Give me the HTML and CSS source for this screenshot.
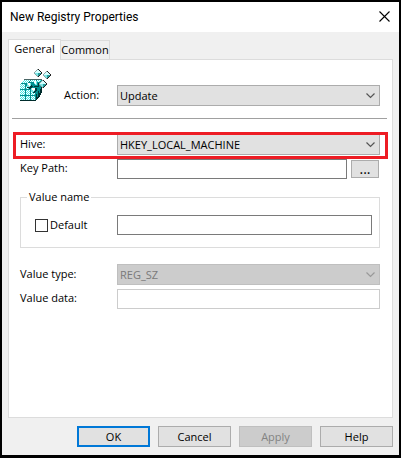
FILE: index.html
```html
<!DOCTYPE html>
<html lang="en">
<head>
<meta charset="utf-8">
<meta name="viewport" content="width=device-width, initial-scale=1">
<title>New Registry Properties</title>
<link rel="stylesheet" href="styles.css">
</head>
<body>
<main class="window">
  <header class="titlebar">
    <h1 class="title">New Registry Properties</h1>
    <button class="close" type="button" aria-label="Close">
      <svg width="11" height="11" viewBox="0 0 11 11"><path d="M.5 .5l10 10M10.500 .5l-10 10" stroke="#000" stroke-width="1.1" fill="none"/></svg>
    </button>
  </header>
  <form class="body">
    <div class="tabs" role="tablist">
      <button class="tab active" type="button" role="tab" aria-selected="true">General</button>
      <button class="tab" type="button" role="tab" aria-selected="false">Common</button>
    </div>
    <section class="panel" role="tabpanel">
      <div class="row action">
        <div class="lead">
          <svg class="icon" width="32" height="32" viewBox="0 0 32 32" shape-rendering="crispEdges" aria-hidden="true">
            <defs>
              <pattern id="dots" width="2" height="2" patternUnits="userSpaceOnUse">
                <rect width="2" height="2" fill="#4ce4e4"/>
                <rect width="1" height="1" fill="#fff"/><rect x="1" y="1" width="1" height="1" fill="#fff"/>
              </pattern>
              <g id="gem">
                <path d="M4 0h1v1h1v1h1v1h1v2h-1v1h-1v1h-1v1h-1z" fill="#222"/>
                <path d="M4 0v8h-1v-1h-1v-1h-1v-1h-1v-2h1v-1h1v-1h1v-1z" fill="#8fa4a4"/>
                <path d="M3 1h2v1h1v1h1v1h-6v-1h1v-1h1z" fill="#d4ffff"/>
                <path d="M1 4h3v3h-1v-1h-1v-1h-1z" fill="#7ae6e6"/>
                <path d="M4 4h3v1h-1v1h-1v1h-1z" fill="#2a9c9c"/>
              </g>
            </defs>
            <path d="M0 15h1v-1h1v-1h1v-1h1v-1h1v-1h17v14h-1v2h-1v2h-1v1h-1v1h-1v1h-1v1H0z" fill="#008f8f"/>
            <path d="M4 10h18v1H4z" fill="#4a6666"/>
            <path d="M21 17h1v7h-1v2h-1v2h-1v1h-1v1h-1v1h-1v-1h1v-2h1v-2h1v-2h1v-4h1zM0 31h16v1H0z" fill="#002c2c"/>
            <path d="M5 11h5l-3 3H1zM11 11h5l-2 2h-5zM17 11h4l-1 2h-4z" fill="url(#dots)"/>
            <path d="M0 15h5v5H0zM0 21h5v5H0zM0 27h5v4H0zM6 21h4v5H6zM6 27h4v4H6zM11 27h4v4h-4z" fill="url(#dots)"/>
            <path d="M11 23h4v3h-4zM6 17h4v3H6z" fill="url(#dots)"/>
            <path d="M16 25h1v5h-1zM18 22h1v5h-1z" fill="#003a3a"/>
            <path d="M13 17l-2 3-4-1v-1h3v-2zM19 18h-5v-1h4v-3h1zM17 19v2l-2 3-4-1v-1h3v-3z" fill="#003a3a"/>
            <path d="M7 14h4v3l-2 1H7z" fill="#7ae6e6"/><path d="M8 14h2v3h-1z" fill="#fff"/>
            <path d="M13 12h4v4h-2z" fill="#7ae6e6"/><path d="M14 12h2v3h-1z" fill="#fff"/>
            <path d="M11 19h4v3l-2 1h-2z" fill="#7ae6e6"/><path d="M12 19h3v2l-2 1z" fill="#fff"/>
            <use href="#gem" x="14" y="0"/>
            <use href="#gem" x="23" y="2"/>
            <use href="#gem" x="19" y="11"/>
          </svg>
          <label for="action">Action:</label>
        </div>
        <select id="action"><option>Update</option></select>
      </div>
      <hr class="rule">
      <div class="row hive">
        <label for="hive">Hive:</label>
        <select id="hive"><option>HKEY_LOCAL_MACHINE</option></select>
      </div>
      <div class="row key">
        <label for="key">Key Path:</label>
        <div class="browse-field">
          <input id="key" class="text" type="text">
          <button class="browse" type="button" aria-label="Browse">...</button>
        </div>
      </div>
      <fieldset class="group">
        <legend>Value name</legend>
        <div class="check">
          <input id="default" type="checkbox">
          <label for="default">Default</label>
        </div>
        <input class="text" type="text" aria-label="Value name">
      </fieldset>
      <div class="row type">
        <label for="type">Value type:</label>
        <select id="type" disabled><option>REG_SZ</option></select>
      </div>
      <div class="row data">
        <label for="data">Value data:</label>
        <input id="data" class="text muted" type="text">
      </div>
    </section>
    <footer class="actions">
      <button class="btn primary" type="button">OK</button>
      <button class="btn" type="button">Cancel</button>
      <button class="btn" type="button" disabled>Apply</button>
      <button class="btn" type="button">Help</button>
    </footer>
  </form>
</main>
</body>
</html>
```
FILE: styles.css
```css
* { box-sizing: border-box; }

body {
  margin: 0;
  background: #f0f0f0;
  color: #000;
  font: 11px/14px "Open Sans", "Noto Sans", sans-serif;
}

button, input, select { font: inherit; color: inherit; margin: 0; border-radius: 0; }

.window {
  min-height: 100vh;
  display: flex;
  flex-direction: column;
  border: 2px solid #000;
  border-bottom-width: 3px;
}

.titlebar {
  height: 30px;
  padding: 0 7px 0 8px;
  display: flex;
  align-items: center;
  justify-content: space-between;
  background: #fff;
}
.title { margin: 0; font: 400 12px/16px Roboto, "Open Sans", sans-serif; }
.close { display: flex; padding: 0 2px 2px 0; border: 0; background: none; }

.body {
  flex: 1;
  display: flex;
  flex-direction: column;
  padding: 7px 6px 8px;
}

.tabs { display: flex; align-items: flex-end; }
.tab {
  height: 19px;
  width: 49px;
  padding: 0;
  border: 1px solid #dcdcdc;
  border-width: 1px 1px 0 0;
  background: #f0f0f0;
}
.tab.active {
  width: 53px;
  height: 21px;
  margin-bottom: -1px;
  padding-bottom: 2px;
  border-left-width: 1px;
  background: #fff;
  position: relative;
}

.panel {
  flex: 1;
  padding: 0 12px 0 11px;
  border: 1px solid #dcdcdc;
  background: #fff;
}

.row { display: grid; grid-template-columns: 97px 1fr; align-items: center; }
.row label { padding-bottom: 2px; }

.action { padding-top: 9px; align-items: end; }
.lead { display: flex; gap: 12px; align-items: flex-end; height: 37px; }
.lead label { padding-bottom: 4px; }
.icon { align-self: flex-start; }

.rule { height: 1px; margin: 12px -7px 15px -8px; border: 0; background: #a0a0a0; }

select {
  appearance: none;
  width: 100%;
  height: 21px;
  padding: 0 20px 0 2px;
  border: 1px solid #acacac;
  background: #e1e1e1 url("data:image/svg+xml,%3Csvg xmlns='http://www.w3.org/2000/svg' width='9' height='6'%3E%3Cpath d='M.5 .5l4 4 4-4' fill='none' stroke='%23555' stroke-width='1.2'/%3E%3C/svg%3E") no-repeat right 4px center;
}
select:disabled {
  opacity: 1;
  color: #7a7a7a;
  border-color: #bfbfbf;
  background-color: #ccc;
  background-image: url("data:image/svg+xml,%3Csvg xmlns='http://www.w3.org/2000/svg' width='9' height='6'%3E%3Cpath d='M.5 .5l4 4 4-4' fill='none' stroke='%23999' stroke-width='1.2'/%3E%3C/svg%3E");
}

.hive { position: relative; }
.hive::after {
  content: "";
  position: absolute;
  inset: -2px -8px -4px -7px;
  border: 3px solid #ed1c24;
  pointer-events: none;
}

.text {
  width: 100%;
  min-width: 0;
  height: 20px;
  padding: 0 3px;
  border: 1px solid #7a7a7a;
  background: #fff;
}
.text.muted { border-color: #ccc; }

.key { margin-top: 4px; }
.browse-field { display: flex; align-items: center; gap: 4px; padding-right: 1px; }
.browse { flex: none; width: 28px; height: 18px; padding: 0; border: 1px solid #acacac; background: #e1e1e1; font-size: 14px; line-height: 14px; }

.group {
  min-width: 0;
  margin: 11px 0 0;
  padding: 11px 7px 12px 14px;
  border: 1px solid #dcdcdc;
  display: grid;
  grid-template-columns: 82px 1fr;
  align-items: center;
}
.group legend { margin-left: -8px; padding: 0 2px; }
.check { display: flex; align-items: center; gap: 2px; }
.check input { appearance: none; width: 13px; height: 13px; border: 1px solid #333; background: #fff; }
.check input:checked { background: #333; }

.type { margin-top: 16px; }
.data { margin-top: 4px; }

.actions {
  display: flex;
  justify-content: flex-end;
  gap: 8px;
  padding-top: 8px;
}
.btn { width: 73px; height: 21px; padding: 0; border: 1px solid #acacac; background: #e1e1e1; }
.btn.primary { border: 2px solid #0078d7; }
.btn:disabled { color: #838383; border-color: #bfbfbf; background: #ccc; }
```
